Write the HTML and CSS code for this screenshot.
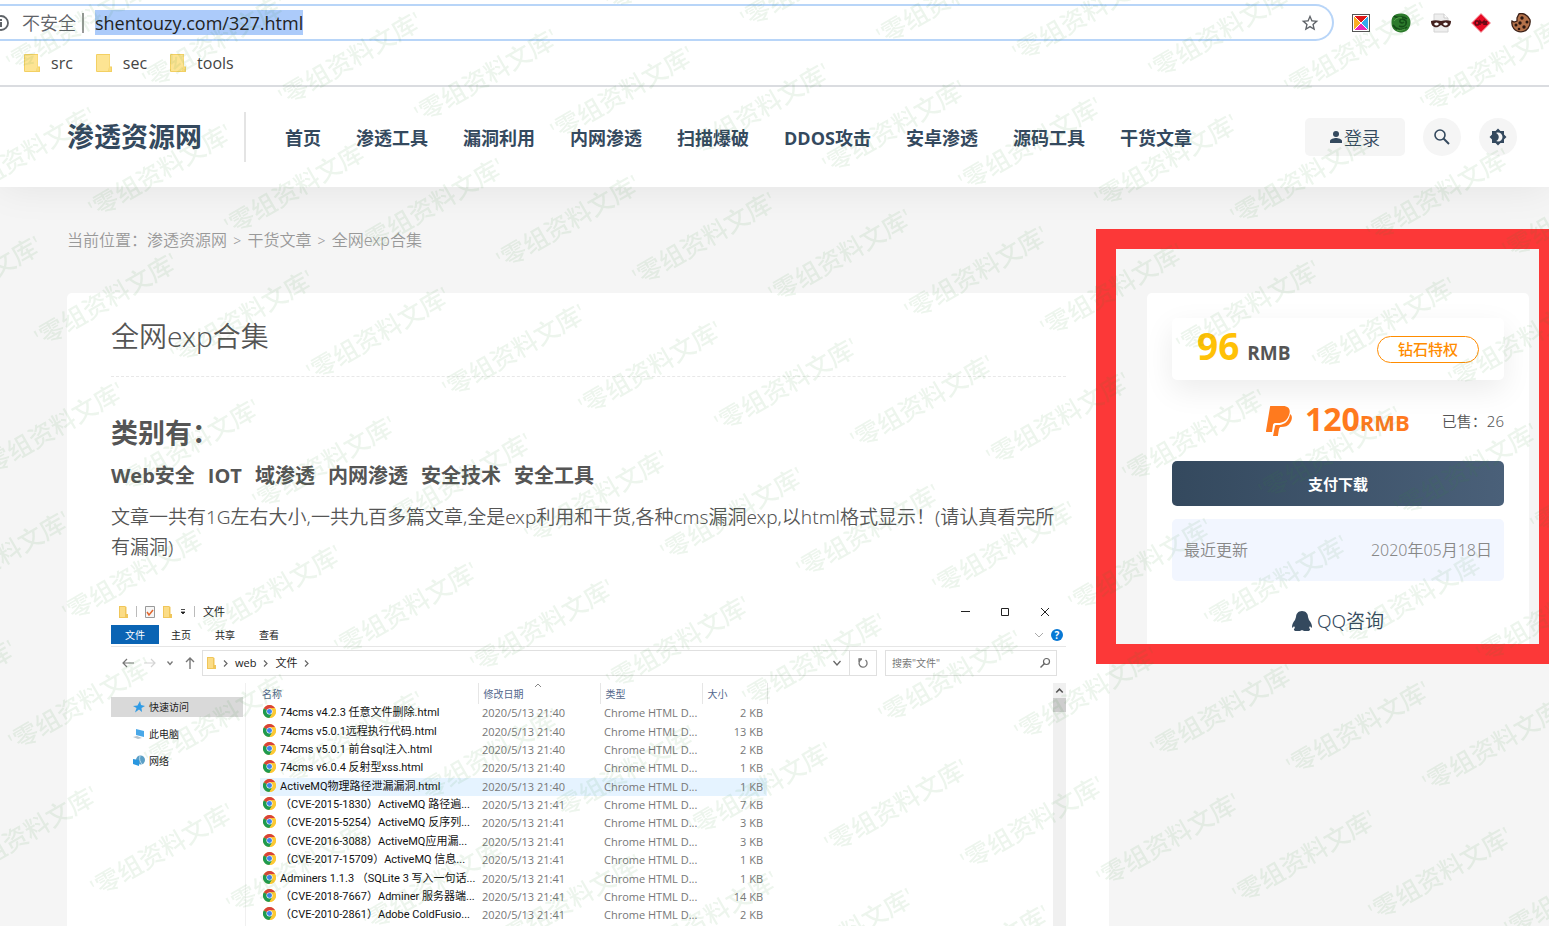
FILE: index.html
```html
<!DOCTYPE html>
<html lang="zh-CN">
<head>
<meta charset="utf-8">
<title>全网exp合集</title>
<link rel="stylesheet" href="styles.css">
</head>
<body>
<svg class="sprite" aria-hidden="true">
  <symbol id="chrome" viewBox="0 0 24 24">
    <circle cx="12" cy="12" r="12" fill="#fcc934"/>
    <path d="M12 12 1.600 6A12 12 0 0 0 12 24l5.200-9z" fill="#1e9a50"/>
    <path d="M12 12 1.600 6A12 12 0 0 1 22.400 6H12z" fill="#d9423a"/>
    <path d="M12 6h10.400A12 12 0 0 1 12 24l5.200-9z" fill="#fcc934"/>
    <circle cx="12" cy="12" r="5.600" fill="#fff"/>
    <circle cx="12" cy="12" r="4.600" fill="#3f83ee"/>
  </symbol>
  <symbol id="bookmark-folder" viewBox="0 0 16 18">
    <path d="M1 0h13v12.500h2V18H1a1 1 0 0 1-1-1V1a1 1 0 0 1 1-1z" fill="#f3d063"/>
    <path d="M1 1h12.500v11.500L12 17H1z" fill="#fde493"/>
    <path d="M12.500 17v-3l1.500-1.500 1 1.500v3z" fill="#f9dc7c"/>
  </symbol>
  <symbol id="small-folder" viewBox="0 0 9 12">
    <path d="M0 0h6l1.500 1v7H9v4H0z" fill="#f0c65a"/>
    <path d="M1 1h5v10H1z" fill="#fbdc86"/>
  </symbol>
  <symbol id="chevron" viewBox="0 0 5 9">
    <path d="m1 1.500 3 3-3 3" fill="none" stroke="currentColor" stroke-width="1.200"/>
  </symbol>
</svg>

<div class="browser">
  <div class="address-row">
    <div class="omnibox">
      <svg class="info" viewBox="0 0 16 16"><circle cx="8" cy="8" r="7" fill="none" stroke="#5f6368" stroke-width="1.800"/><path d="M8 7v5M8 4v2" stroke="#5f6368" stroke-width="2"/></svg>
      <label class="security" for="url">不安全</label>
      <input class="url" id="url" type="text" value="shentouzy.com/327.html">
      <svg class="star" viewBox="0 0 24 24"><path fill="#5f6368" d="M22 9.240l-7.190-.62L12 2 9.190 8.630 2 9.240l5.460 4.730L5.820 21 12 17.270 18.180 21l-1.630-7.030L22 9.240zM12 15.400l-3.760 2.270 1-4.280-3.320-2.880 4.380-.38L12 6.100l1.710 4.040 4.380.38-3.320 2.880 1 4.280L12 15.400z"/></svg>
    </div>
    <div class="extensions">
      <svg viewBox="0 0 20 20"><rect x="1.500" y="1.500" width="17" height="17" fill="#fff" stroke="#555"/><path d="M3 3h14l-7 7z" fill="#e01818"/><path d="M3 3v14l7-7z" fill="#fbaf24"/><path d="M17 3v14l-7-7z" fill="#35a9ee"/><path d="M3 17h14l-7-7z" fill="#ea27b7"/><path d="m3 3 14 14M17 3 3 17" stroke="#fff"/></svg>
      <svg viewBox="0 0 20 20"><path d="M10 .500C15 0 20 4 19.500 10S15 19.500 10 19.500.500 16 .500 10 2 1 10 .500z" fill="#2c7a2c"/><path d="M3 3c4 4 8-2 13 3M8 13c5 2 8-1 7-5-3-3-7-2-6 1 2 2 4 0 4 0M2 12c3 5 9 6 14 2" fill="none" stroke="#144d18" stroke-width="1.600"/><path d="M3 8c2-3 6-4 8-3M6 17c3 1 6 0 8-1" fill="none" stroke="#59a84d"/></svg>
      <svg viewBox="0 0 20 20"><path d="M3 1h10l4 4v14H3z" fill="#eee" stroke="#d4d4d4"/><path d="M13 1v4h4" fill="#fff" stroke="#ccc"/><path d="M0 8c3-1 6-1 10 0 4-1 7-1 10 0 0 5-3 7-7 6l-3-2-3 2C3 15 0 13 0 8z" fill="#43211e"/><path d="M3 11c2-2 3-2 5 0-2 2-3 2-5 0zM12 11c2-2 3-2 5 0-2 2-3 2-5 0z" fill="#fff"/></svg>
      <svg viewBox="0 0 20 20"><path d="m10 .500 9.500 9.500-9.500 9.500L.500 10z" fill="#e80b25" stroke="#f5a8ae"/><path d="M7 8H5l-1 2 1 2h2l1-2zM9 12V8l2 2 2-2v4M14 8l2 4m0-4-2 4" fill="none" stroke="#650914" stroke-width="1.500"/></svg>
      <svg viewBox="0 0 20 20"><path d="M8 .800c4-1 9 1 11 6 1 6-3 12-9 12S0 14 1 8l2 1 3-1V5z" fill="#b4724a" stroke="#3b2017" stroke-width="1.300"/><g fill="#29150f"><circle cx="11" cy="5" r="1.700"/><circle cx="16" cy="9" r="1.500"/><circle cx="9" cy="10" r="1.700"/><circle cx="5" cy="12" r="1.500"/><circle cx="13" cy="14" r="1.700"/><circle cx="8" cy="16" r="1.300"/></g></svg>
    </div>
  </div>
  <nav class="bookmarks" aria-label="书签">
    <a href="#"><svg><use href="#bookmark-folder"/></svg>src</a>
    <a href="#"><svg><use href="#bookmark-folder"/></svg>sec</a>
    <a href="#"><svg><use href="#bookmark-folder"/></svg>tools</a>
  </nav>
</div>

<header class="site-header">
  <a class="logo" href="#">渗透资源网</a>
  <nav class="site-nav">
    <a href="#">首页</a><a href="#">渗透工具</a><a href="#">漏洞利用</a><a href="#">内网渗透</a><a href="#">扫描爆破</a><a href="#">DDOS攻击</a><a href="#">安卓渗透</a><a href="#">源码工具</a><a href="#">干货文章</a>
  </nav>
  <div class="actions">
    <button class="login" type="button"><svg viewBox="0 0 12 12"><circle cx="6" cy="3" r="3"/><path d="M0 12v-2c0-2 4-3 6-3s6 1 6 3v2z"/></svg>登录</button>
    <button class="round" type="button" aria-label="搜索"><svg viewBox="0 0 18 18"><circle cx="7" cy="7" r="5" fill="none" stroke="currentColor" stroke-width="1.600"/><path d="m10.500 10.500 5.500 5.500" stroke="currentColor" stroke-width="2"/></svg></button>
    <button class="round" type="button" aria-label="夜间模式"><svg viewBox="0 0 24 24"><path fill="currentColor" d="M20 8.690V4h-4.690L12 .690 8.690 4H4v4.690L.690 12 4 15.310V20h4.690L12 23.310 15.310 20H20v-4.690L23.310 12 20 8.690zM12 18c-.89 0-1.740-.2-2.500-.55C11.560 16.500 13 14.420 13 12s-1.440-4.500-3.500-5.450C10.260 6.200 11.110 6 12 6c3.310 0 6 2.690 6 6s-2.690 6-6 6z"/></svg></button>
  </div>
</header>

<main class="page">
  <nav class="crumbs" aria-label="当前位置">当前位置：<a href="#">渗透资源网</a> <small>&gt;</small> <a href="#">干货文章</a> <small>&gt;</small> 全网exp合集</nav>
  <div class="columns">
    <article class="article">
      <h1>全网exp合集</h1>
      <h2>类别有：</h2>
      <h3><span>Web安全</span><span>IOT</span><span>域渗透</span><span>内网渗透</span><span>安全技术</span><span>安全工具</span></h3>
      <p>文章一共有1G左右大小,一共九百多篇文章,全是exp利用和干货,各种cms漏洞exp,以html格式显示！(请认真看完所有漏洞)</p>

      <section class="explorer" aria-label="文件">
        <div class="titlebar">
          <svg class="folder"><use href="#small-folder"/></svg>
          <i class="bar"></i>
          <svg class="check" viewBox="0 0 10 12"><path d="M.500.500h9v11h-9z" fill="#f6f6f6" stroke="#999"/><path d="m2 6 2 3 4-5" fill="none" stroke="#e2662d" stroke-width="1.500"/></svg>
          <svg class="folder"><use href="#small-folder"/></svg>
          <svg class="caret" viewBox="0 0 6 6"><path d="M1 .500h4M1 3h4L3 5z" fill="#222" stroke="#222" stroke-width=".8"/></svg>
          <i class="bar"></i>
          <span>文件</span>
          <div class="window-buttons">
            <button type="button" aria-label="最小化"><svg viewBox="0 0 10 10"><path d="M1 4.500h9"/></svg></button>
            <button type="button" aria-label="最大化"><svg viewBox="0 0 10 10"><path d="M1.500 1.500h7v7h-7z"/></svg></button>
            <button type="button" aria-label="关闭"><svg viewBox="0 0 10 10"><path d="m1 1 8 8M9 1 1 9"/></svg></button>
          </div>
        </div>
        <div class="ribbon">
          <button class="active" type="button">文件</button><button type="button">主页</button><button type="button">共享</button><button type="button">查看</button>
          <svg class="fold" viewBox="0 0 10 10"><path d="m1 3 4 4 4-4" fill="none" stroke="#aaa"/></svg>
          <span class="help">?</span>
        </div>
        <div class="location">
          <div class="arrows">
            <svg viewBox="0 0 12 12"><path d="M12 6H1m4-4L1 6l4 4" fill="none" stroke="#777" stroke-width="1.200"/></svg>
            <svg viewBox="0 0 12 12"><path d="M0 6h11M7 2l4 4-4 4" fill="none" stroke="#d4d4d4" stroke-width="1.200"/></svg>
            <svg class="tiny" viewBox="0 0 8 12"><path d="m1.500 4.500 2.500 3 2.500-3" fill="none" stroke="#777" stroke-width="1.300"/></svg>
            <svg viewBox="0 0 12 12"><path d="M6 12V1M2 5l4-4 4 4" fill="none" stroke="#777" stroke-width="1.400"/></svg>
          </div>
          <div class="path">
            <svg class="folder"><use href="#small-folder"/></svg>
            <svg class="chev"><use href="#chevron"/></svg><span>web</span>
            <svg class="chev"><use href="#chevron"/></svg><span>文件</span>
            <svg class="chev"><use href="#chevron"/></svg>
            <svg class="drop" viewBox="0 0 10 10"><path d="m1.500 3 3.500 4 3.500-4" fill="none" stroke="#666" stroke-width="1.300"/></svg>
            <button class="refresh" type="button" aria-label="刷新"><svg viewBox="0 0 12 12"><path d="M4.500 2.500a4 4 0 1 0 4 .500M5 2H2v3" fill="none" stroke="#777" stroke-width="1.300"/></svg></button>
          </div>
          <div class="search">
            <input type="search" aria-label="搜索文件" placeholder='搜索"文件"'>
            <svg viewBox="0 0 12 12"><circle cx="7.500" cy="4.500" r="3" fill="none" stroke="#666" stroke-width="1.200"/><path d="M5.500 6.500 1.500 10.500" stroke="#666" stroke-width="1.400"/></svg>
          </div>
        </div>
        <div class="panes">
          <ul class="places">
            <li class="current"><svg viewBox="0 0 12 12"><path d="m7 0 1 4 4 1-3.500 2L9 11 6 8.500 2 11.500 3.500 7 0 5l4.500-.500z" fill="#2f9be5"/></svg>快速访问</li>
            <li><svg viewBox="0 0 12 12"><path d="m3 1 8 2v6L3 7z" fill="#4aa8e8"/><path d="m0 9 4-1 5 2-4 1z" fill="#b8c4cc"/></svg>此电脑</li>
            <li><svg viewBox="0 0 12 12"><circle cx="7.500" cy="5" r="4.500" fill="#5b9fc6"/><path d="m0 4 6 1v6l-6-2z" fill="#2997e0"/><path d="M7 1c-1 3 0 6 2 8" fill="none" stroke="#b9dcef"/></svg>网络</li>
          </ul>
          <table class="files">
            <colgroup><col class="c-name"><col class="c-date"><col class="c-type"><col class="c-size"></colgroup>
            <thead><tr><th>名称</th><th class="sorted">修改日期<svg viewBox="0 0 8 5"><path d="m1 4 3-3 3 3" fill="none" stroke="#888"/></svg></th><th>类型</th><th>大小</th></tr></thead>
            <tbody>
              <tr><td><svg><use href="#chrome"/></svg>74cms v4.2.3 任意文件删除.html</td><td>2020/5/13 21:40</td><td>Chrome HTML D...</td><td>2 KB</td></tr>
              <tr><td><svg><use href="#chrome"/></svg>74cms v5.0.1远程执行代码.html</td><td>2020/5/13 21:40</td><td>Chrome HTML D...</td><td>13 KB</td></tr>
              <tr><td><svg><use href="#chrome"/></svg>74cms v5.0.1 前台sql注入.html</td><td>2020/5/13 21:40</td><td>Chrome HTML D...</td><td>2 KB</td></tr>
              <tr><td><svg><use href="#chrome"/></svg>74cms v6.0.4 反射型xss.html</td><td>2020/5/13 21:40</td><td>Chrome HTML D...</td><td>1 KB</td></tr>
              <tr class="hover"><td><svg><use href="#chrome"/></svg>ActiveMQ物理路径泄漏漏洞.html</td><td>2020/5/13 21:40</td><td>Chrome HTML D...</td><td>1 KB</td></tr>
              <tr><td><svg><use href="#chrome"/></svg>（CVE-2015-1830）ActiveMQ 路径遍...</td><td>2020/5/13 21:41</td><td>Chrome HTML D...</td><td>7 KB</td></tr>
              <tr><td><svg><use href="#chrome"/></svg>（CVE-2015-5254）ActiveMQ 反序列...</td><td>2020/5/13 21:41</td><td>Chrome HTML D...</td><td>3 KB</td></tr>
              <tr><td><svg><use href="#chrome"/></svg>（CVE-2016-3088）ActiveMQ应用漏...</td><td>2020/5/13 21:41</td><td>Chrome HTML D...</td><td>3 KB</td></tr>
              <tr><td><svg><use href="#chrome"/></svg>（CVE-2017-15709）ActiveMQ 信息...</td><td>2020/5/13 21:41</td><td>Chrome HTML D...</td><td>1 KB</td></tr>
              <tr><td><svg><use href="#chrome"/></svg>Adminers 1.1.3 （SQLite 3 写入一句话...</td><td>2020/5/13 21:41</td><td>Chrome HTML D...</td><td>1 KB</td></tr>
              <tr><td><svg><use href="#chrome"/></svg>（CVE-2018-7667）Adminer 服务器端...</td><td>2020/5/13 21:41</td><td>Chrome HTML D...</td><td>14 KB</td></tr>
              <tr><td><svg><use href="#chrome"/></svg>（CVE-2010-2861）Adobe ColdFusio...</td><td>2020/5/13 21:41</td><td>Chrome HTML D...</td><td>2 KB</td></tr>
              <tr><td><svg><use href="#chrome"/></svg></td><td></td><td></td><td></td></tr>
            </tbody>
          </table>
          <div class="scrollbar"><svg viewBox="0 0 10 10"><path d="m2.500 6.500 2.500-2.500 2.500 2.500" fill="none" stroke="#555" stroke-width="1.200"/></svg><i></i></div>
        </div>
      </section>
    </article>

    <aside class="shop">
      <div class="price"><strong>96</strong><b>RMB</b><span class="pill">钻石特权</span></div>
      <div class="paypal">
        <svg viewBox="0 0 26 30"><path fill="#ff7a1e" d="M5 0h12c6 0 8 4 6 9-2 6-6 8-11 8H9c-1 0-2 1-2 2l-1 7H1c-1 0-1 0-1-1L4 1c0-1 0-1 1-1z"/><path fill="#ff7a1e" d="M24 8c3 2 2 6 0 9s-5 4-9 4c-1 0-1 0-2 2l-1 6c0 1 0 1-1 1H7l2-10c0-1 1-1 2-1h3c5-1 9-4 10-11z"/></svg>
        <strong>120<small>RMB</small></strong><span>已售：26</span>
      </div>
      <button class="pay" type="button">支付下载</button>
      <div class="updated"><span>最近更新</span><span>2020年05月18日</span></div>
      <a class="qq" href="#"><svg viewBox="0 0 20 20"><path fill="#34495e" d="M10 0c4 0 6 3 6 6l1 3c2 2 3 5 3 7 0 1-1 1-2-1l-1 2c2 1 1 3-1 3-3 0-5 0-6-1-1 1-3 1-6 1-2 0-3-2-1-3l-1-2c-1 2-2 2-2 1 0-2 1-5 3-7l1-3c0-3 2-6 6-6z"/></svg>QQ咨询</a>
    </aside>
  </div>
</main>

<svg class="watermark" aria-hidden="true"></svg>
<script src="watermark.js"></script>
</body>
</html>
```
FILE: styles.css
```css
* { box-sizing: border-box; }
body {
  margin: 0;
  height: 100vh;
  overflow: hidden;
  background: #f5f5f5;
  color: #555;
  font-family: "Open Sans", "Noto Sans CJK SC", sans-serif;
  font-size: 16px;
}
a { color: inherit; text-decoration: none; }
button, input { font: inherit; color: inherit; border: 0; background: none; padding: 0; }
svg { display: block; flex: none; }
.sprite { display: none; }

.browser { position: relative; z-index: 1; background: #fff; border-bottom: 2px solid #dadce0; padding-top: 4px; }
.address-row { display: flex; align-items: center; }
.omnibox {
  flex: 1;
  display: flex;
  align-items: center;
  height: 37px;
  border: 2px solid #b8d5f8;
  border-left: 0;
  border-radius: 0 19px 19px 0;
  padding-right: 12px;
}
.info { width: 16px; height: 16px; margin-left: -7px; }
.security {
  margin-left: 13px;
  padding-right: 6px;
  border-right: 2px solid #9a9a9a;
  color: #5f6368;
  font-size: 18px;
  font-weight: 350;
  line-height: 20px;
}
.url { width: 208px; height: 25px; margin-left: 11px; background: #accbfa; color: #222; font-size: 18px; }
.star { width: 20px; height: 20px; margin-left: auto; }
.extensions { display: flex; gap: 20px; margin: 0 18px 0 17px; }
.extensions svg { width: 20px; height: 20px; }
.bookmarks { display: flex; gap: 23px; padding: 0 24px; height: 44px; align-items: center; color: #444; }
.bookmarks a { display: flex; align-items: center; gap: 11px; }
.bookmarks svg { width: 16px; height: 18px; }

.site-header {
  display: flex;
  align-items: center;
  height: 100px;
  padding: 0 32px 0 67px;
  background: #fff;
  color: #34495e;
  box-shadow: 0 0 40px rgba(0, 0, 0, .08);
  position: relative;
}
.logo { font-size: 27px; font-weight: 700; line-height: 50px; padding-right: 42px; border-right: 2px solid #e4e4e4; }
.site-nav { display: flex; gap: 35px; margin-left: 39px; font-size: 18px; font-weight: 700; white-space: nowrap; }
.actions { display: flex; gap: 18px; margin-left: auto; }
.actions button { height: 38px; background: #f5f5f5; display: flex; align-items: center; justify-content: center; }
.login { width: 100px; border-radius: 5px; font-size: 18px; font-weight: 350; gap: 2px; }
.login svg { width: 12px; height: 12px; fill: currentColor; }
.round { width: 38px; border-radius: 50%; }
.round svg { width: 18px; height: 18px; }

.page { padding: 41px 20px 0 67px; }
.crumbs, h1, .article p, .paypal span, .updated, .qq {
  font-family: "Noto Sans", "Noto Sans CJK SC", sans-serif;
  font-weight: 350;
}
.crumbs { color: #999; line-height: 24px; }
.crumbs small { margin: 0 2px; font-size: 14px; line-height: 16px; }
.columns { display: grid; grid-template-columns: 1fr 382px; gap: 38px; margin-top: 41px; align-items: start; }

.article { background: #fff; border-radius: 5px; padding: 23px 43px 0 44px; min-width: 0; }
h1 { margin: 0; padding-bottom: 20px; border-bottom: 1px dashed #e8e8e8; font-size: 28px; line-height: 40px; }
h2 { margin: 36px 0 0; font-size: 27px; line-height: 40px; }
h3 { display: flex; gap: 13px; margin: 8px 0 0; font-size: 20px; line-height: 30px; }
.article p { margin: 11px 0 0; font-size: 19px; line-height: 30px; }

.explorer { margin-top: 38px; font-size: 11px; color: #222; line-height: 18px; }
.titlebar { display: flex; align-items: center; height: 25px; gap: 8px; padding: 0 0 2px 8px; }
.folder { width: 9px; height: 12px; }
.bar { width: 1px; height: 11px; background: #bbb; }
.check { width: 10px; height: 12px; }
.caret { width: 6px; height: 6px; }
.window-buttons { display: flex; gap: 30px; margin-left: auto; padding-right: 16px; }
.window-buttons svg { width: 10px; height: 10px; fill: none; stroke: #222; }
.ribbon { display: flex; align-items: center; height: 22px; border-bottom: 1px solid #e6e6e6; padding-bottom: 2px; }
.ribbon button { width: 44px; height: 19px; font-size: 10px; }
.ribbon .active { width: 48px; background: #0a64b4; color: #fff; }
.fold { width: 10px; height: 10px; margin-left: auto; }
.help { width: 12px; height: 12px; margin: 0 3px 0 7px; border-radius: 50%; background: #0878d4; color: #fff; font-size: 10px; font-weight: 700; line-height: 12px; text-align: center; }
.location { display: flex; margin-top: 3px; height: 26px; padding-right: 9px; }
.arrows { display: flex; align-items: center; gap: 10px; width: 91px; padding-left: 11px; }
.arrows svg { width: 12px; height: 12px; }
.arrows .tiny { width: 8px; }
.path { flex: 1; display: flex; align-items: center; gap: 7px; border: 1px solid #e0e0e0; padding-left: 4px; }
.chev { width: 5px; height: 9px; color: #666; }
.drop { width: 10px; height: 10px; margin-left: auto; }
.refresh { width: 27px; height: 24px; border-left: 1px solid #e0e0e0; display: grid; place-items: center; }
.refresh svg { width: 12px; height: 12px; }
.search { display: flex; align-items: center; width: 172px; margin-left: 8px; border: 1px solid #e0e0e0; padding: 0 5px 0 6px; }
.search input { flex: 1; min-width: 0; font-size: 10px; }
.search input::placeholder { color: #777; }
.search svg { width: 12px; height: 12px; }
.panes { display: flex; align-items: stretch; margin-top: 7px; }
.places { list-style: none; width: 135px; margin: 0; padding: 14px 2px 0 0; border-right: 1px solid #f0f0f0; }
.places li { display: flex; align-items: center; gap: 4px; height: 20px; padding-left: 22px; margin-bottom: 7px; font-size: 10px; }
.places .current { background: #d9d9d9; }
.places svg { width: 12px; height: 12px; }
.files { table-layout: fixed; width: 507px; height: 260px; margin-left: 14px; border-collapse: collapse; white-space: nowrap; }
.c-name { width: 218px; }
.c-date { width: 122px; }
.c-type { width: 102px; }
.c-size { width: 65px; }
th { height: 21px; padding: 0 0 0 5px; border-right: 1px solid #e6e6e6; color: #52678c; font-size: 10px; font-weight: 400; line-height: 20px; text-align: left; }
th:first-child { padding-left: 2px; }
.sorted { position: relative; }
.sorted svg { position: absolute; top: 0; left: 46%; width: 8px; height: 5px; }
td { padding: 0 0 0 4px; color: #777; line-height: 16px; }
td:first-child { padding-left: 3px; color: #111; font-family: Roboto, "Noto Sans CJK SC", sans-serif; }
td:last-child { text-align: right; padding-right: 4px; }
td svg { display: inline-block; width: 13px; height: 13px; margin-right: 4px; vertical-align: -2px; }
.hover { background: #e5f3ff; }
.scrollbar { width: 13px; margin-left: auto; background: #f0f0f0; }
.scrollbar svg { width: 13px; height: 15px; }
.scrollbar i { display: block; height: 14px; background: #cdcdcd; }

.shop { position: relative; background: #fff; border-radius: 5px; padding: 25px 25px 13px; }
.shop::after { content: ""; position: absolute; inset: -64px -30px -14px -51px; border: 20px solid #fc3838; pointer-events: none; }
.price { display: flex; align-items: baseline; height: 62px; padding: 0 25px; border-radius: 5px; background: #fff; box-shadow: 0 10px 30px rgba(0, 0, 0, .08); line-height: 56px; }
.price strong { color: #ffc107; font-size: 37px; }
.price b { margin-left: 8px; font-size: 19px; }
.pill { align-self: center; margin-left: auto; padding: 0 20px; border: 1px solid #ff8c00; border-radius: 14px; color: #ff8c00; font-size: 15px; line-height: 25px; font-weight: 500; }
.paypal { display: flex; align-items: center; justify-content: flex-end; height: 81px; color: #ff7a1e; }
.paypal svg { width: 26px; height: 30px; margin-right: 13px; }
.paypal strong { font-size: 32px; line-height: 40px; }
.paypal small { font-size: 22px; }
.paypal span { margin-left: 32px; color: #555; font-size: 15px; }
.pay { display: block; width: 100%; height: 45px; border-radius: 5px; background: linear-gradient(90deg, #34495e, #4a6079); color: #fff; font-size: 15px; font-weight: 700; }
.updated { display: flex; justify-content: space-between; margin-top: 13px; padding: 0 12px; border-radius: 5px; background: #f2f6ff; color: #888; line-height: 62px; }
.qq { display: flex; align-items: center; justify-content: center; gap: 5px; margin-top: 24px; color: #34495e; font-size: 19px; line-height: 32px; }
.qq svg { width: 20px; height: 20px; }

.watermark { position: fixed; inset: 0; width: 100%; height: 100%; z-index: 2; pointer-events: none; fill: rgba(50, 140, 60, .09); font-size: 25px; font-weight: 500; }
```
FILE: watermark.js
```javascript
// Tiles the slanted label over the window on a skewed grid.
const layer = document.querySelector('.watermark');
const columnStep = { x: 136, y: 17 };
const rowStep = { x: -54, y: 129 };

for (let row = -4; row < 12; row++) {
  for (let column = -2; column < 18; column++) {
    const x = 13 + column * columnStep.x + row * rowStep.x;
    const y = 73 + column * columnStep.y + row * rowStep.y;
    if (x < -150 || x > innerWidth || y < 0 || y > innerHeight + 80) continue;
    const text = document.createElementNS('http://www.w3.org/2000/svg', 'text');
    text.setAttribute('transform', `translate(${x} ${y}) rotate(-30)`);
    text.textContent = "'零组资料文库'";
    layer.append(text);
  }
}
```
